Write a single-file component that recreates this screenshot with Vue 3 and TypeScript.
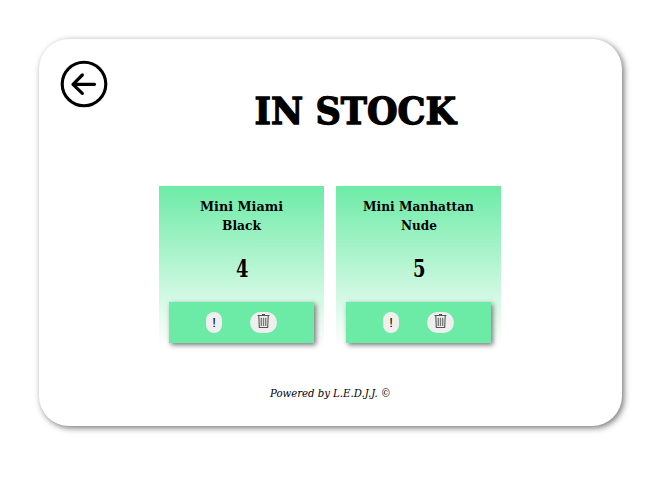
<script setup lang="ts">
interface Line {
  text: string
  width: number
}
interface Product {
  id: number
  name: Line[]
  stock: number
}

const products: Product[] = [
  { id: 1, name: [{ text: 'Mini Miami', width: 83 }, { text: 'Black', width: 39 }], stock: 4 },
  { id: 2, name: [{ text: 'Mini Manhattan', width: 111 }, { text: 'Nude', width: 36 }], stock: 5 },
]
</script>

<template>
  <div class="page">
    <main class="panel">
      <header class="top">
        <button class="back" aria-label="Back">
          <svg width="48" height="48" viewBox="0 0 48 48" fill="none" stroke="#000">
            <circle cx="24" cy="24" r="21.8" stroke-width="3.1" />
            <path d="M34.5 24.3H13M22.3 15L13 24.3L22.3 33.3" stroke-width="3.2" stroke-linecap="round" stroke-linejoin="round" />
          </svg>
        </button>
        <h1 class="title">
          <svg width="204" height="40">
            <text x="0.6" y="33.4" textLength="201.5" lengthAdjust="spacingAndGlyphs">IN STOCK</text>
          </svg>
        </h1>
      </header>

      <section class="products">
        <article v-for="product in products" :key="product.id" class="product">
          <h2 class="name">
            <svg v-for="line in product.name" :key="line.text" :width="line.width" height="19">
              <text x="0" y="15" :textLength="line.width" lengthAdjust="spacingAndGlyphs">{{ line.text }}</text>
            </svg>
          </h2>
          <p class="stock">
            <svg width="12" height="24">
              <text x="0" y="20" textLength="12.5" lengthAdjust="spacingAndGlyphs">{{ product.stock }}</text>
            </svg>
          </p>
          <div class="actions">
            <button class="pill info">!</button>
            <button class="pill trash" aria-label="Delete">
              <svg width="13" height="15" viewBox="0 0 13 15" fill="none" stroke="#555">
                <path d="M0.5 1.5H12.5M5 0.5H8" stroke-width="1.1" />
                <path d="M1.8 2L2.3 13.5H10.7L11.2 2" stroke-width="1.1" />
                <path d="M4.3 3.8V12M6.5 3.8V12M8.7 3.8V12" stroke="#777" stroke-width="1.3" />
              </svg>
            </button>
          </div>
        </article>
      </section>

      <footer class="footer">
        <svg width="121" height="16">
          <text x="0" y="12" textLength="121" lengthAdjust="spacingAndGlyphs">Powered by L.E.D.J.J. ©</text>
        </svg>
      </footer>
    </main>
  </div>
</template>

<style>
body {
  background: #fff;
}
</style>

<style scoped>
.page {
  box-sizing: border-box;
  height: 492px;
  padding: 39px;
}
.panel {
  box-sizing: border-box;
  width: 583px;
  height: 387px;
  border-radius: 30px;
  background: #fff;
  box-shadow: 2px 2px 6px #777;
  display: flex;
  flex-direction: column;
  font-family: Rockwell, "DejaVu Serif", serif;
  color: #000;
}
svg {
  display: block;
  overflow: visible;
}
text {
  fill: #000;
}
.top {
  display: flex;
  height: 147px;
}
.back {
  width: 48px;
  height: 48px;
  margin: 21px 0 0 21px;
  padding: 0;
  border: 0;
  background: none;
}
.title {
  margin: 52px 0 0 146px;
  font-size: 37px;
  font-weight: 700;
}
.title text {
  stroke: #000;
  stroke-width: 1.3px;
}
.products {
  display: flex;
  gap: 12px;
  margin-left: 120px;
}
.product {
  box-sizing: border-box;
  width: 165px;
  height: 160px;
  padding: 10px 10px 0;
  background: linear-gradient(#6ceba6, #fff);
}
.name {
  display: flex;
  flex-direction: column;
  align-items: center;
  margin: 0;
  font-size: 13px;
  font-weight: 700;
}
.stock {
  display: flex;
  justify-content: center;
  margin: 23px 0 0;
  font-size: 23.5px;
  font-weight: 700;
}
.actions {
  box-sizing: border-box;
  display: flex;
  align-items: center;
  gap: 28px;
  width: 145px;
  height: 41px;
  margin-top: 21px;
  padding-left: 37px;
  background: #6ceba6;
  box-shadow: 2px 2px 5px #777;
}
.pill {
  display: flex;
  justify-content: center;
  height: 21px;
  padding: 0;
  border: 0;
  border-radius: 11px;
  background: #efefef;
}
.info {
  align-items: center;
  width: 16px;
  color: #000;
  font: 400 13.33px/21px "Liberation Sans", Arial, sans-serif;
}
.trash {
  width: 27px;
  padding-top: 2px;
}
.footer {
  display: flex;
  justify-content: center;
  margin-top: 39px;
  font-size: 11px;
  font-style: italic;
}
</style>
